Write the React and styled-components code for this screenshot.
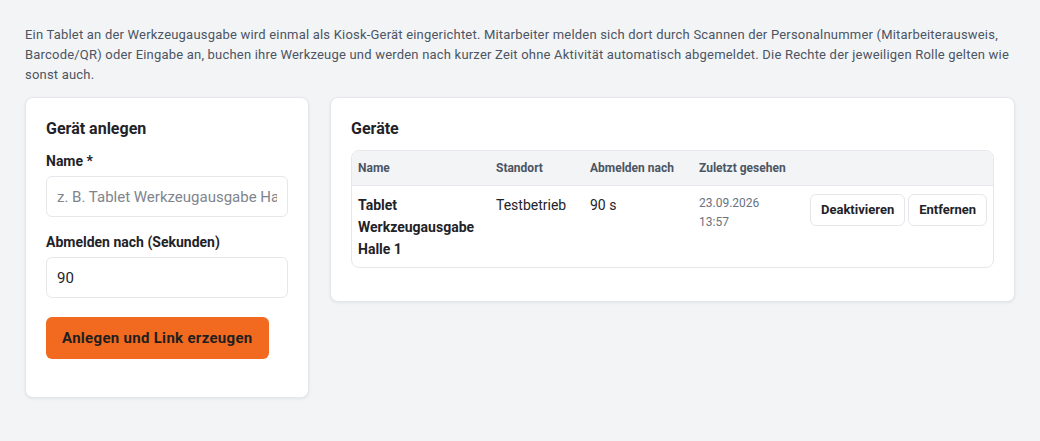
import React from "react";
import styled, { createGlobalStyle } from "styled-components";

const Global = createGlobalStyle`
  html, body {
    margin: 0;
    background: #f3f4f6;
  }
  body {
    font-family: Roboto, "Liberation Sans", sans-serif;
    color: #1f2328;
  }
  * {
    box-sizing: border-box;
  }
`;

const Page = styled.div`
  padding: 25px 25px 40px;
`;

const Intro = styled.p`
  margin: 0 0 12px;
  font-size: 13px;
  letter-spacing: 0.2px;
  line-height: 20px;
  color: #4b5563;
`;

const Layout = styled.div`
  display: grid;
  grid-template-columns: 284px 1fr;
  gap: 21px;
  align-items: start;
`;

const Card = styled.section`
  background: #fff;
  border: 1px solid #e5e7eb;
  border-radius: 8px;
  box-shadow: 0 1px 3px rgba(15, 23, 42, 0.08);
  padding: 21px 20px ${p => p.$bottom || 20}px;
`;

const Title = styled.h2`
  margin: 0 0 ${p => p.$gap || 12}px;
  font-size: 16px;
  line-height: 20px;
  font-weight: 700;
  color: #1f2328;
`;

const Label = styled.label`
  display: block;
  margin: ${p => p.$top || 0}px 0 5px;
  font-size: 14px;
  line-height: 20px;
  font-weight: 700;
  color: #1f2328;
`;

const Input = styled.input`
  display: block;
  width: 100%;
  height: 41px;
  padding: 0 10px;
  border: 1px solid #e5e7eb;
  border-radius: 6px;
  background: #fff;
  font-family: inherit;
  font-size: 15px;
  color: #1f2328;
  outline: none;
  &::placeholder {
    color: #80858d;
  }
`;

const PrimaryButton = styled.button`
  display: inline-flex;
  align-items: center;
  height: 42px;
  margin-top: 19px;
  padding: 0 16px;
  border: none;
  border-radius: 6px;
  background: #f26a1f;
  color: #1f1f1f;
  font-family: inherit;
  font-size: 15px;
  letter-spacing: 0.3px;
  font-weight: 700;
  cursor: pointer;
`;

const TableWrap = styled.div`
  border: 1px solid #e5e7eb;
  border-radius: 8px;
  overflow: hidden;
`;

const Table = styled.table`
  width: 100%;
  border-collapse: collapse;
  table-layout: fixed;
`;

const Th = styled.th`
  height: 34px;
  padding: 0 6px;
  background: #f3f4f6;
  border-bottom: 1px solid #e5e7eb;
  text-align: left;
  font-size: 12px;
  font-weight: 700;
  color: #4b5563;
`;

const Td = styled.td`
  padding: 8px 6px 7px;
  vertical-align: top;
  font-size: 14px;
  line-height: 22px;
  font-weight: ${p => (p.$bold ? 700 : 400)};
  color: #1f2328;
`;

const DateText = styled.div`
  font-size: 12px;
  line-height: 19px;
  color: #6b7280;
`;

const Actions = styled.div`
  display: flex;
  gap: 3px;
`;

const SmallButton = styled.button`
  height: 32px;
  padding: 0 10px;
  border: 1px solid #e5e7eb;
  border-radius: 6px;
  background: #fff;
  color: #1f2328;
  font-family: inherit;
  font-size: 13px;
  font-weight: 700;
  cursor: pointer;
`;

const devices = [
  {
    name: "Tablet Werkzeugausgabe Halle 1",
    location: "Testbetrieb",
    timeout: "90 s",
    date: "23.09.2026",
    time: "13:57"
  }
];

export default function App() {
  return (
    <Page>
      <Global />
      <Intro>
        Ein Tablet an der Werkzeugausgabe wird einmal als Kiosk-Gerät eingerichtet. Mitarbeiter melden sich dort
        durch Scannen der Personalnummer (Mitarbeiterausweis, Barcode/QR) oder Eingabe an, buchen ihre Werkzeuge und
        werden nach kurzer Zeit ohne Aktivität automatisch abgemeldet. Die Rechte der jeweiligen Rolle gelten wie
        sonst auch.
      </Intro>
      <Layout>
        <Card $bottom={38}>
          <Title>Gerät anlegen</Title>
          <Label>Name *</Label>
          <Input placeholder="z. B. Tablet Werkzeugausgabe Halle 1" />
          <Label $top={15}>Abmelden nach (Sekunden)</Label>
          <Input defaultValue="90" />
          <PrimaryButton>Anlegen und Link erzeugen</PrimaryButton>
        </Card>
        <Card $bottom={33}>
          <Title $gap={11}>Geräte</Title>
          <TableWrap>
            <Table>
              <colgroup>
                <col style={{ width: 138 }} />
                <col style={{ width: 94 }} />
                <col style={{ width: 109 }} />
                <col style={{ width: 111 }} />
                <col />
              </colgroup>
              <thead>
                <tr>
                  <Th>Name</Th>
                  <Th>Standort</Th>
                  <Th>Abmelden nach</Th>
                  <Th>Zuletzt gesehen</Th>
                  <Th />
                </tr>
              </thead>
              <tbody>
                {devices.map(d => (
                  <tr key={d.name}>
                    <Td $bold>{d.name}</Td>
                    <Td>{d.location}</Td>
                    <Td>{d.timeout}</Td>
                    <Td>
                      <DateText>
                        {d.date}
                        <br />
                        {d.time}
                      </DateText>
                    </Td>
                    <Td>
                      <Actions>
                        <SmallButton>Deaktivieren</SmallButton>
                        <SmallButton>Entfernen</SmallButton>
                      </Actions>
                    </Td>
                  </tr>
                ))}
              </tbody>
            </Table>
          </TableWrap>
        </Card>
      </Layout>
    </Page>
  );
}
